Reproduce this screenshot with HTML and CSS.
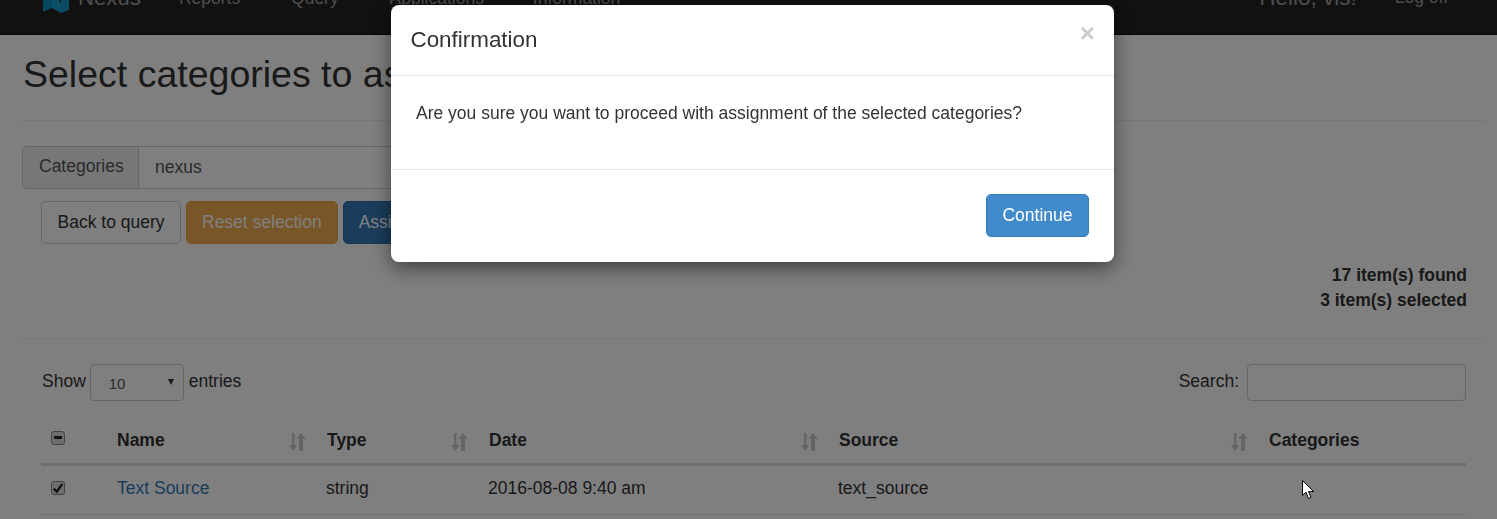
FILE: index.html
```html
<!DOCTYPE html>
<html lang="en">
<head>
<meta charset="utf-8">
<title>Nexus</title>
<link rel="stylesheet" href="styles.css">
</head>
<body>
<div class="page">
  <nav class="navbar">
    <a class="brand">
      <svg class="logo" viewBox="0 0 28 28" width="28" height="28" aria-hidden="true">
        <path fill="#108cbe" d="M1 2 10 0V22L1 26Z"/>
        <path fill="#14a0d0" d="M10 0 19 18V27L10 22Z"/>
        <path fill="#1296c8" d="M19 0 27 0V24L19 27Z"/>
      </svg>
      <span>Nexus</span>
    </a>
    <a class="nav-link nav-reports">Reports <i class="caret"></i></a>
    <a class="nav-link nav-query">Query <i class="caret"></i></a>
    <a class="nav-link nav-apps">Applications <i class="caret"></i></a>
    <a class="nav-link nav-info">Information <i class="caret"></i></a>
    <span class="hello">Hello, vis!</span>
    <a class="nav-link nav-logoff">Log off</a>
  </nav>

  <main class="content">
    <h1 class="page-title">Select categories to assign</h1>

    <div class="input-group">
      <span class="addon">Categories</span>
      <span class="group-value">nexus</span>
    </div>

    <div class="actions">
      <button class="btn btn-default">Back to query</button>
      <button class="btn btn-warning">Reset selection</button>
      <button class="btn btn-primary">Assign categories</button>
    </div>

    <div class="counts">
      <div>17 item(s) found</div>
      <div>3 item(s) selected</div>
    </div>

    <div class="table-area">
      <div class="table-controls">
        <label class="length">Show <span class="select">10<i class="select-arrow"></i></span> entries</label>
        <label class="search">Search: <span class="search-input"></span></label>
      </div>

      <table class="data">
        <thead>
          <tr>
            <th class="col-check"><span class="check check-mixed"></span></th>
            <th class="col-name">Name<svg class="sort" viewBox="0 0 18 18" aria-hidden="true"><path d="M4 0H6.500V12H9.500L5.250 18 1 12H4Z"/><path d="M11 18H15V6H18L13 0 8 6H11Z"/></svg></th>
            <th class="col-type">Type<svg class="sort" viewBox="0 0 18 18" aria-hidden="true"><path d="M4 0H6.500V12H9.500L5.250 18 1 12H4Z"/><path d="M11 18H15V6H18L13 0 8 6H11Z"/></svg></th>
            <th class="col-date">Date<svg class="sort" viewBox="0 0 18 18" aria-hidden="true"><path d="M4 0H6.500V12H9.500L5.250 18 1 12H4Z"/><path d="M11 18H15V6H18L13 0 8 6H11Z"/></svg></th>
            <th class="col-source">Source<svg class="sort" viewBox="0 0 18 18" aria-hidden="true"><path d="M4 0H6.500V12H9.500L5.250 18 1 12H4Z"/><path d="M11 18H15V6H18L13 0 8 6H11Z"/></svg></th>
            <th class="col-cats">Categories</th>
          </tr>
        </thead>
        <tbody>
          <tr>
            <td><span class="check check-on"><svg viewBox="0 0 10 10" aria-hidden="true"><path d="M1.500 5.500 4 8 8.500 1.800" fill="none" stroke="#222" stroke-width="2"/></svg></span></td>
            <td><a class="link">Text Source</a></td>
            <td>string</td>
            <td>2016-08-08 9:40 am</td>
            <td>text_source</td>
            <td></td>
          </tr>
        </tbody>
      </table>
    </div>
  </main>
</div>

<div class="backdrop"></div>

<div class="modal" role="dialog">
  <header class="modal-header">
    <h4 class="modal-title">Confirmation</h4>
    <span class="close">×</span>
  </header>
  <div class="modal-body">Are you sure you want to proceed with assignment of the selected categories?</div>
  <footer class="modal-footer">
    <button class="btn btn-continue">Continue</button>
  </footer>
</div>

<svg class="cursor" viewBox="0 0 13 20" width="13" height="20" aria-hidden="true">
  <path d="M.5.5V15.500L4 12.200 6.500 18.500 9 17.500 6.500 11.500H11.500Z" fill="#fff" stroke="#000" stroke-width="1"/>
</svg>
</body>
</html>
```

FILE: styles.css
```css
* { box-sizing: border-box; }

html, body {
  margin: 0;
  height: 519px;
  overflow: hidden;
}

body {
  background: #fff;
  color: #333;
  font-family: "Liberation Sans", Arial, sans-serif;
  font-size: 17.5px;
  line-height: 25px;
}

.page { margin-top: -16px; }

.navbar {
  height: 51px;
  background: #222;
  border-bottom: 1px solid #080808;
  display: flex;
  align-items: flex-start;
  color: #9d9d9d;
}

.brand {
  display: flex;
  align-items: flex-start;
  gap: 8px;
  margin-left: 42px;
  margin-top: -2px;
  font-size: 22.200px;
  line-height: 32px;
}

.logo { flex: none; margin-top: 4px; }

.nav-link { line-height: 25px; padding-top: 2px; }
.nav-reports { margin-left: 38px; }
.nav-query { margin-left: 42px; }
.nav-apps { margin-left: 42px; }
.nav-info { margin-left: 40px; }

.hello {
  margin-left: auto;
  margin-top: -2px;
  font-size: 22.500px;
  line-height: 32px;
}

.nav-logoff {
  margin-left: 38px;
  margin-right: 49px;
  padding-top: 1px;
}

.caret {
  display: inline-block;
  width: 0;
  height: 0;
  vertical-align: middle;
  border-top: 2px solid;
  border-left: 2px solid transparent;
  border-right: 2px solid transparent;
}

.content { padding: 0 12px 0 23px; }

.page-title {
  margin: 0;
  height: 86px;
  padding-top: 14px;
  font-size: 37.500px;
  line-height: 50px;
  font-weight: 400;
  border-bottom: 1px solid #eee;
  white-space: nowrap;
}

.input-group {
  display: flex;
  width: 720px;
  height: 43px;
  margin: 25px 0 12px -1px;
}

.addon {
  width: 117px;
  padding: 0 16px;
  line-height: 38px;
  background: #eee;
  border: 1px solid #ccc;
  border-radius: 5px 0 0 5px;
  color: #555;
}

.group-value {
  flex: 1;
  padding: 0 16px;
  line-height: 41px;
  color: #555;
  border: 1px solid #ccc;
  border-left: 0;
}

.actions {
  display: flex;
  gap: 5px;
  margin-left: 18px;
}

.btn {
  height: 43px;
  padding: 0 15px;
  font: inherit;
  border: 1px solid transparent;
  border-radius: 5px;
  white-space: nowrap;
}

.btn-default { background: #fff; border-color: #ccc; color: #333; padding: 0 15.500px; }
.btn-warning { background: #f0ad4e; border-color: #eea236; color: #fff; }
.btn-primary { background: #337ab7; border-color: #2e6da4; color: #fff; }

.counts {
  margin: 19px 18px 0 0;
  text-align: right;
  font-weight: 700;
  height: 75px;
}

.table-area { border-top: 1px solid #eee; padding: 25px 0 0 18px; }

.table-controls {
  display: flex;
  justify-content: space-between;
  align-items: center;
  height: 37px;
  margin-right: 19px;
}

.length, .search {
  display: flex;
  align-items: center;
  font-weight: 400;
  margin-top: -2px;
}

.length { gap: 4px; margin-left: 1px; }
.search { gap: 8px; }

.select {
  position: relative;
  width: 94px;
  height: 37px;
  margin: 2px 1px 0 0;
  padding-left: 18px;
  font-size: 15px;
  line-height: 37px;
  color: #555;
  border: 1px solid #ccc;
  border-radius: 4px;
}

.select-arrow {
  position: absolute;
  right: 9px;
  top: 14px;
  border-top: 6px solid #333;
  border-left: 3.500px solid transparent;
  border-right: 3.500px solid transparent;
}

.search-input {
  width: 219px;
  height: 37px;
  margin-top: 2px;
  border: 1px solid #ccc;
  border-radius: 4px;
}

.data {
  width: 1425px;
  margin-top: 16px;
  border-collapse: collapse;
  table-layout: fixed;
}

.data th {
  position: relative;
  height: 47px;
  padding: 2px 10px 0 11px;
  text-align: left;
  font-weight: 700;
  border-bottom: 3px solid #ddd;
  vertical-align: middle;
}

.data td {
  height: 50px;
  padding: 10px 10px 0;
  border-bottom: 1px solid #ddd;
  vertical-align: top;
}

.data .col-check { padding-left: 10px; }

.col-check { width: 65px; }
.col-name { width: 210px; }
.col-type { width: 162px; }
.col-date { width: 350px; }
.col-source { width: 430px; }

.sort {
  position: absolute;
  right: 10px;
  top: 16px;
  width: 18px;
  height: 18px;
  fill: #000;
  opacity: .2;
}

.check {
  display: block;
  width: 14px;
  height: 14px;
  border-radius: 3px;
  border: 1px solid #888;
  background: #ddd;
}

.check-mixed { position: relative; margin-top: -6px; }
.check-mixed::after {
  content: "";
  position: absolute;
  left: 2px;
  top: 4.500px;
  width: 8px;
  height: 3px;
  background: #222;
}

.check-on { margin-top: 5px; }
.check-on svg { display: block; width: 12px; height: 12px; }

.link { color: #337ab7; margin-left: 1px; }

.backdrop {
  position: fixed;
  inset: 0;
  background: rgba(0, 0, 0, .5);
}

.modal {
  position: fixed;
  left: 391px;
  top: 5px;
  width: 723px;
  height: 257px;
  background: #fff;
  border-radius: 8px;
  box-shadow: 0 6px 19px rgba(0, 0, 0, .5);
}

.modal-header {
  position: relative;
  height: 71px;
  border-bottom: 1px solid #e5e5e5;
  padding: 21px 19.500px 0;
}

.modal-title {
  margin: 0;
  font-size: 22.400px;
  line-height: 28px;
  font-weight: 400;
}

.close {
  position: absolute;
  top: 15px;
  right: 19px;
  font-size: 26px;
  font-weight: 700;
  line-height: 26px;
  color: #000;
  opacity: .2;
}

.modal-body {
  height: 93px;
  padding: 25px 25px 0;
}

.modal-footer {
  border-top: 1px solid #e5e5e5;
  padding: 24px 25px 0;
  display: flex;
  justify-content: flex-end;
}

.btn-continue {
  padding: 0 15.500px;
  background: #428bca;
  border-color: #357ebd;
  color: #fff;
}

.cursor {
  position: fixed;
  left: 1302px;
  top: 480px;
}
```
